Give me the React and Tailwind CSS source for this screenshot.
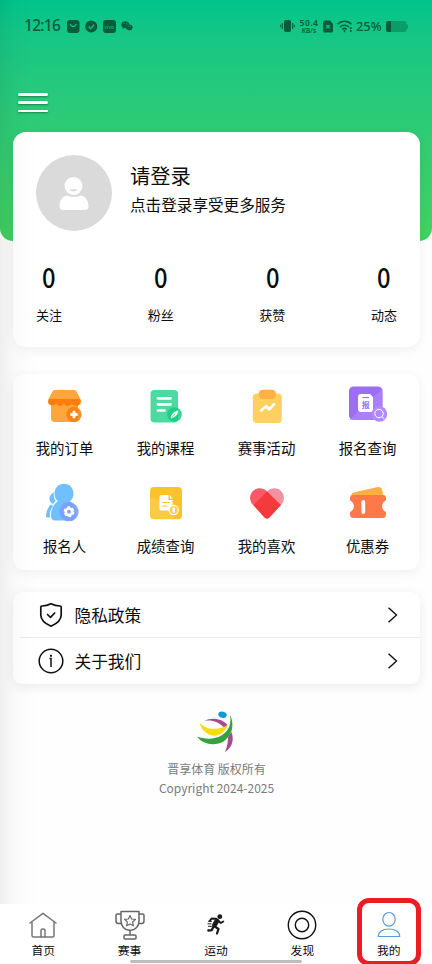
import { FaWeixin } from 'react-icons/fa';

const STATS = ['关注', '粉丝', '获赞', '动态'];

const OrderIcon = () => (
  <svg className="w-12 h-12" viewBox="0 0 48 48" fill="none">
    <path d="M10 22h27v15a4 4 0 0 1-4 4H14a4 4 0 0 1-4-4z" fill="#ffa63d" />
    <path d="M14 9h19a3 3 0 0 1 2.700 1.700L40 19c.6 3-1 5.500-4 5.500H11c-3 0-4.600-2.500-4-5.500l4.300-8.300A3 3 0 0 1 14 9z" fill="#ffa63d" />
    <path d="M9 18h28.500q2 0 2 2c0 3-2 5-4.500 5-2 0-3.500-1-4.200-2.500-1 1.500-2.500 2.500-4 2.500-1.600 0-3-1-3.800-2.500-1 1.500-2.400 2.500-4 2.500s-3.200-1-4-2.500c-.8 1-2.200 1.500-3.500 1.500C8.500 24 7 22 7.500 20q0-2 1.500-2z" fill="#ff7d0c" />
    <circle cx="33" cy="33.500" r="7.700" fill="#ff7a0a" opacity=".85" />
    <path d="M33 31v5M30.500 33.500h5" stroke="#fff" strokeWidth="3" strokeLinecap="round" />
  </svg>
);

const CourseIcon = () => (
  <svg className="w-12 h-12" viewBox="0 0 48 48" fill="none">
    <rect x="8.500" y="9" width="27.500" height="32.500" rx="4" fill="#4bdba0" />
    <path d="M16 17.300h12.500M16 23.300h12.500M16 29.500h6.500" stroke="#fff" strokeWidth="2.700" strokeLinecap="round" />
    <circle cx="32.500" cy="33.500" r="7.300" fill="#14cd82" opacity=".85" />
    <path d="M28.700 37.800c.3-4.500 3.300-7.500 7.600-8.200-.3 3.900-2.600 6.700-7.600 8.200z" fill="#fff" />
    <path d="M29 37.500l4-4.500" stroke="#14cd82" strokeWidth=".7" />
  </svg>
);

const EventIcon = () => (
  <svg className="w-12 h-12" viewBox="0 0 48 48" fill="none">
    <rect x="9.800" y="12.500" width="29" height="29.500" rx="4" fill="#ffcf60" />
    <rect x="15.800" y="8.700" width="17" height="9.300" rx="4" fill="#ffb243" />
    <path d="M18 29.500l5.300-4.300 3 3L31 23.300" stroke="#fff" strokeWidth="2.700" strokeLinecap="round" strokeLinejoin="round" />
  </svg>
);

const EnrollQueryIcon = () => (
  <svg className="w-12 h-12" viewBox="0 0 48 48" fill="none">
    <rect x="5" y="5.500" width="33.500" height="33.500" rx="4.500" fill="#9b6ef3" />
    <path d="M5 39L38.500 8v26.500a4.500 4.500 0 0 1-4.500 4.500z" fill="#b48cff" opacity=".6" />
    <path d="M17 13h9l3 3v12.500a2.500 2.500 0 0 1-2.500 2.500h-9.500a3 3 0 0 1-3-3V16a3 3 0 0 1 3-3z" fill="#fff" />
    <path d="M18.500 16.500h6.500" stroke="#9b6ef3" strokeWidth="1.200" />
    <text x="21.700" y="26.700" fontSize="8" fontWeight="700" textAnchor="middle" fill="#9b6ef3">报</text>
    <circle cx="35.500" cy="33" r="7.700" fill="#b38af8" />
    <circle cx="35" cy="32.500" r="4.200" stroke="#fff" strokeWidth="1" />
    <path d="M38 35.700l2 1.800" stroke="#fff" strokeWidth="1" strokeLinecap="round" />
  </svg>
);

const PeopleIcon = () => (
  <svg className="w-12 h-12" viewBox="0 0 48 48" fill="none">
    <path d="M13 13.500c-4.500 1.500-6 6.500-3 10.300l2 1.200c.7-1.200 1.500-2 2.700-3-1.700-2.500-2.300-5.500-1.700-8.500zM10 25.500c-3 2.500-5 7.500-5 11.500 0 1 .5 1.500 1.500 1.500H9c-.5-4.500.5-8.500 3-11.500z" fill="#70bfff" />
    <path d="M23 4.800c5.300 0 9.500 4.200 9.500 9.600 0 3.400-1.200 5.900-3.500 7.900 4 2.500 6 7 6 14 0 3-2 5.200-5 5.200H14.500c-3 0-4.500-1.500-4.500-4.500 0-7 2.500-12 7-14.700-2.300-2-3.500-4.500-3.500-7.900 0-5.400 4.200-9.600 9.500-9.600z" fill="#70bfff" />
    <circle cx="28" cy="32.700" r="9.600" fill="#7c9efa" opacity=".92" />
    <circle cx="28" cy="32.700" r="3.200" stroke="#fff" strokeWidth="2.600" />
    <circle cx="28" cy="32.700" r="4.700" stroke="#fff" strokeWidth="1.500" strokeDasharray="2.900 2.022" />
  </svg>
);

const ScoreIcon = () => (
  <svg className="w-12 h-12" viewBox="0 0 48 48" fill="none">
    <rect x="8" y="8" width="32" height="32.300" rx="4" fill="#fcc22d" />
    <path d="M8 19c9 0 21 8 24 21H12a4 4 0 0 1-4-4z" fill="#ffd765" opacity=".4" />
    <path d="M19.500 16h7v5h4v8.500a2 2 0 0 1-2 2h-9a2 2 0 0 1-2-2V18a2 2 0 0 1 2-2z" fill="#fff" />
    <path d="M27.800 16l3 3.500h-3z" fill="#fff" />
    <path d="M20.500 23.500h7M20.500 27h5" stroke="#fcc22d" strokeWidth="1.200" />
    <circle cx="31.700" cy="31" r="4.600" fill="#fbcf55" stroke="#fff" strokeWidth="1.100" />
    <rect x="30.500" y="28.200" width="2.400" height="5.400" rx="1.200" fill="#fff" />
  </svg>
);

const HeartIcon = () => (
  <svg className="w-12 h-12" viewBox="0 0 48 48" fill="none">
    <path d="M24 12.500c3.800-4 9.700-4.200 13.700-.8 4 3.600 4.200 9.800.8 13.500L26.300 38.500c-1.400 1.400-3.200 1.400-4.600 0L18 35z" fill="#f192a3" />
    <path d="M24 12.500c-3.800-4-9.700-4.200-13.700-.8-4 3.600-4.200 9.800-.8 13.500l12.200 13.300c1.400 1.400 3.200 1.400 4.600 0L38 26z" fill="#fa5a68" />
    <path d="M24 12.500L37.800 26 26.300 38.500c-1.400 1.400-3.200 1.400-4.600 0L10.500 26.200z" fill="#f43a3d" />
  </svg>
);

const CouponIcon = () => (
  <svg className="w-12 h-12" viewBox="0 0 48 48" fill="none">
    <rect x="6" y="4.500" width="36" height="14" fill="#fcfcfc" />
    <path d="M7.500 16.500c0-2 1-2.700 3-3.200L34 8q2.500-.5 3.500 1.500L40 18H7.500z" fill="#ffae44" />
    <path d="M9 16h30a3 3 0 0 1 3 3v2.500c-5.200 2.500-5.200 9 0 11.500v2.500a3.500 3.500 0 0 1-3.500 3.500h-29A3.500 3.500 0 0 1 6 35.500V33c5.200-2.500 5.200-9 0-11.500V19a3 3 0 0 1 3-3z" fill="#ff7848" />
    <path d="M19.300 23v10" stroke="#fff" strokeWidth="3.800" strokeLinecap="round" />
  </svg>
);

const MENU = [
  { label: '我的订单', icon: OrderIcon },
  { label: '我的课程', icon: CourseIcon },
  { label: '赛事活动', icon: EventIcon },
  { label: '报名查询', icon: EnrollQueryIcon },
  { label: '报名人', icon: PeopleIcon },
  { label: '成绩查询', icon: ScoreIcon },
  { label: '我的喜欢', icon: HeartIcon },
  { label: '优惠券', icon: CouponIcon },
];

const ShieldIcon = () => (
  <svg className="w-[26px] h-[26px]" viewBox="0 0 26 26" fill="none" stroke="#111" strokeWidth="1.700" strokeLinejoin="round" strokeLinecap="round">
    <path d="M13 1.800c2.700 1.500 6 2.200 9.200 2.200q1 0 1 1v8c0 5.500-4 8.500-10.200 11.200C6.800 21.500 2.800 18.500 2.800 13V5q0-1 1-1C7 4 10.300 3.300 13 1.800z" />
    <path d="M9.500 12.500l3 2.800 4.200-4.300" />
  </svg>
);

const InfoIcon = () => (
  <svg className="w-[26px] h-[26px]" viewBox="0 0 26 26" fill="none" stroke="#111" strokeWidth="1.500">
    <circle cx="13" cy="13" r="11.800" />
    <path d="M11.500 10.500H13V19" />
    <path d="M13 6.800v1.900" strokeWidth="1.900" />
  </svg>
);

const LINKS = [
  { label: '隐私政策', icon: ShieldIcon },
  { label: '关于我们', icon: InfoIcon },
];

const HomeIcon = () => (
  <svg className="w-8 h-8" viewBox="0 0 32 32" fill="none" stroke="#777" strokeWidth="1.500" strokeLinejoin="round" strokeLinecap="round">
    <path d="M3 14L16 4.300 29 14M5 13v13.500q0 1.500 1.500 1.500h19q1.500 0 1.500-1.500V13" />
    <path d="M14 28v-6.500q0-1.500 2-1.500t2 1.500V28" />
  </svg>
);

const TrophyIcon = () => (
  <svg className="w-8 h-8" viewBox="0 0 32 32" fill="none" stroke="#666" strokeWidth="1.500" strokeLinejoin="round">
    <path d="M7 2.500h18V12c0 5-3.500 9.300-9 9.300S7 17 7 12zM7 5H3.500Q2 5 2 6.500V12q0 2.500 2.500 2.500h3M25 5h3.500Q30 5 30 6.500V12q0 2.500-2.500 2.500h-3" />
    <path d="M16 21.500V26M11 26h10q1 0 1 1v2q0 1-1 1H11q-1 0-1-1v-2q0-1 1-1z" />
    <path d="M16 6.500l1.600 3.500 3.900.4-2.900 2.600.8 3.800-3.400-1.900-3.400 1.900.8-3.800-2.900-2.600 3.900-.4z" strokeWidth="1.200" />
  </svg>
);

const RunIcon = () => (
  <svg className="w-8 h-8" viewBox="0 0 32 32" fill="none" stroke="#1b1b1b" strokeLinecap="round" strokeLinejoin="round">
    <circle cx="19.800" cy="7.700" r="2.400" fill="#1b1b1b" stroke="none" />
    <path d="M17 11.700L14.500 16" strokeWidth="4.800" />
    <path d="M16 9.800l-4.500-.3-1.800 2.500M18.500 12l2.300 2 2.500-1.500" strokeWidth="1.900" />
    <path d="M14.800 17.500l3.700 2.500-1.500 4.500M13.500 17.500l-1.800 3.700-3.400.3" strokeWidth="2.300" />
    <path d="M8.500 12.300h3M8 14.800h3M8.500 17.300h3" strokeWidth="1" />
  </svg>
);

const DiscoverIcon = () => (
  <svg className="w-8 h-8" viewBox="0 0 32 32" fill="none" stroke="#111" strokeWidth="1.400">
    <circle cx="16" cy="16" r="13.700" />
    <circle cx="16" cy="16" r="6.700" />
  </svg>
);

const MineIcon = () => (
  <svg className="w-8 h-8" viewBox="0 0 32 32" fill="none" stroke="#5a9bdc" strokeWidth="1.200" strokeLinejoin="round">
    <ellipse cx="16" cy="10.300" rx="6.200" ry="6.800" />
    <path d="M5.300 27.500c0-4.500 4.200-7.500 10.700-7.500s10.700 3 10.700 7.500z" />
  </svg>
);

const TABS = [
  { label: '首页', icon: HomeIcon },
  { label: '赛事', icon: TrophyIcon },
  { label: '运动', icon: RunIcon },
  { label: '发现', icon: DiscoverIcon },
  { label: '我的', icon: MineIcon, marked: true },
];

function StatusBar() {
  return (
    <div className="flex items-center h-[52px] pl-6 pr-6 text-[#075c3b]">
      <span className="w-[43px] text-[15.500px] font-medium leading-none tracking-[-0.700px] font-['Noto_Sans',sans-serif]">12:16</span>
      <div className="flex items-center gap-[5.500px]">
        <svg className="w-[12.500px] h-[13px]" viewBox="0 0 12.5 13">
          <rect width="12.500" height="13" rx="3" fill="currentColor" />
          <path d="M3.500 4.500c1.200 2.600 4.300 2.600 5.500 0" fill="none" stroke="#12c587" strokeWidth="1.400" strokeLinecap="round" />
        </svg>
        <svg className="w-[12.500px] h-[13px]" viewBox="0 0 13 13">
          <circle cx="6.500" cy="6.500" r="6.300" fill="currentColor" />
          <path d="M3.700 6.500l2.200 2.200 3.700-4" fill="none" stroke="#12c587" strokeWidth="1.400" />
        </svg>
        <span className="flex items-center justify-center w-[12.500px] h-[13px] rounded-[3px] bg-[#075c3b] text-[5px] leading-none text-[#12c587]">vivo</span>
        <FaWeixin className="w-[12px] h-[12px]" />
      </div>
      <div className="flex items-center ml-auto">
        <svg className="w-[15px] h-[14px]" viewBox="0 0 15 14">
          <rect x="4" y="1" width="7" height="12" rx="1.800" fill="currentColor" />
          <path d="M2.300 4v6M12.700 4v6M.6 5.800v2.400M14.400 5.800v2.400" stroke="currentColor" strokeWidth="1.100" />
        </svg>
        <div className="flex flex-col items-center w-[24px] ml-[2px] mt-[-1px] font-semibold font-['Noto_Sans',sans-serif]">
          <span className="text-[8.500px] leading-[9px] tracking-[0.500px]">50.4</span>
          <span className="text-[6.500px] leading-[7px]">KB/s</span>
        </div>
        <svg className="w-[10px] h-[13px] ml-[2px]" viewBox="0 0 10 13">
          <path d="M2 0.500h5L10 4v7a1.500 1.500 0 0 1-1.500 1.500h-7A1.500 1.500 0 0 1 0 11V2.500a2 2 0 0 1 2-2z" fill="currentColor" />
          <path d="M3.300 5l3.400 3.400M6.700 5L3.300 8.400" stroke="#12c587" strokeWidth="1.200" />
        </svg>
        <svg className="w-[16px] h-[13px] ml-[4px]" viewBox="0 0 16 13" fill="none" stroke="currentColor" strokeWidth="1.600">
          <path d="M.5 4.300c4-4 10-4 14 0M3 7c2.600-2.400 6.300-2.400 8.900 0M5.300 9.500c1.200-1.200 3.100-1.200 4.300 0" />
          <path d="M7.500 10.300v2M13.700 7v5" strokeDasharray="2 1" />
        </svg>
        <span className="w-[30px] ml-[3px] text-[12.800px] leading-none font-medium font-['Noto_Sans',sans-serif]">25%</span>
        <svg className="w-[22px] h-[11px]" viewBox="0 0 22 11">
          <rect width="20.500" height="11" rx="2.500" fill="#0b9d69" />
          <path d="M20 3h1q1 0 1 2.500t-1 2.500h-1z" fill="#0b9d69" />
          <path d="M2.500 0H5v11H2.500A2.500 2.500 0 0 1 0 8.500v-6A2.500 2.500 0 0 1 2.500 0z" fill="currentColor" />
        </svg>
      </div>
    </div>
  );
}

export default function App() {
  return (
    <div className="relative w-[432px] h-[964px] overflow-hidden flex flex-col bg-[#fefefe] text-[#0c0c0c] font-['Noto_Sans_CJK_SC',sans-serif]">
      {/* Header */}
      <header className="shrink-0 h-[241px] rounded-b-[13px] bg-gradient-to-b from-[#00c48b] to-[#43d15f]">
        <StatusBar />
        <button className="flex flex-col gap-[5.700px] w-[30px] ml-[18px] mt-[41px]">
          {[0, 1, 2].map((i) => (
            <span key={i} className="w-full h-[2.700px] rounded-full bg-white shadow-[0_1px_2px_rgba(0,0,0,0.35)]"></span>
          ))}
        </button>
      </header>

      {/* Profile */}
      <section className="shrink-0 h-[215px] -mt-[109px] mx-[13px] w-[407px] rounded-[13px] bg-white shadow-[0_3px_12px_rgba(0,0,0,0.06)]">
        <div className="flex pt-[23px] pl-[23px]">
          <div className="flex items-center justify-center w-[75.500px] h-[75.500px] rounded-full bg-[#dadada]">
            <svg className="w-[32px] h-[36px] mt-[2px]" viewBox="0 0 32 36">
              <circle cx="15.500" cy="10" r="9" fill="#fff" />
              <path d="M11.800 13.300h7.400c-1 3-6.400 3-7.400 0z" fill="#dadada" />
              <path d="M9.500 19.500q6.500 3 13 0c5 .5 8 5 8 10.500 0 3-1.500 4-4.500 4H6c-3 0-4.500-1-4.500-4C1.500 24.500 4.500 20 9.500 19.500z" fill="#fff" />
            </svg>
          </div>
          <div className="ml-[18.500px] pt-[5px]">
            <h1 className="text-[20.300px] leading-[30px]">请登录</h1>
            <p className="text-[15.600px] leading-[24px] mt-[2px]">点击登录享受更多服务</p>
          </div>
        </div>
        <div className="flex justify-between pl-[23px] pr-[23px] mt-[27px]">
          {STATS.map((label) => (
            <div key={label} className="flex flex-col items-center">
              <span className="text-[27px] leading-[38px] font-medium scale-x-[0.88]">0</span>
              <span className="text-[13px] leading-5 mt-[9px]">{label}</span>
            </div>
          ))}
        </div>
      </section>

      {/* Menu grid */}
      <section className="shrink-0 grid grid-cols-4 content-start gap-y-[17px] w-[406px] h-[196px] mt-[27px] ml-[13px] px-[1px] pt-[7px] rounded-[11px] bg-white shadow-[0_3px_12px_rgba(0,0,0,0.06)]">
        {MENU.map(({ label, icon: Icon }) => (
          <div key={label} className="flex flex-col items-center h-[81px]">
            <Icon />
            <span className="mt-[7px] text-[14.400px] leading-6">{label}</span>
          </div>
        ))}
      </section>

      {/* Links */}
      <section className="shrink-0 w-[407px] h-[92px] mt-[22px] ml-[13px] rounded-[9px] bg-white shadow-[0_3px_12px_rgba(0,0,0,0.08)]">
        {LINKS.map(({ label, icon: Icon }, i) => (
          <div
            key={label}
            className={`flex items-center h-[46px] ml-[7px] pl-[18px] pr-[22px] ${i === 0 ? 'border-b border-[#ebebeb]' : ''}`}
          >
            <Icon />
            <span className="ml-[10.500px] text-[16.700px] leading-6">{label}</span>
            <svg className="w-[11px] h-4 ml-auto" viewBox="0 0 11 16" fill="none" stroke="#111" strokeWidth="1.400">
              <path d="M1.500 .8L9.500 8l-8 7.200" />
            </svg>
          </div>
        ))}
      </section>

      {/* Footer */}
      <footer className="flex flex-col items-center flex-1 pl-[1px] text-[#7b7b7b] text-[12px]">
        <svg className="w-[40px] h-[44px] mt-[25px]" viewBox="0 0 40 44">
          <ellipse cx="25.500" cy="5.700" rx="4.300" ry="3.100" fill="#0e9ad7" transform="rotate(15 25.500 5.700)" />
          <path d="M7 12c8-4 18-2.500 23.500 4l-3.500 2.500C21.500 13 14.500 10.500 7 12z" fill="#a94c8d" />
          <path d="M2.500 13.500c6 7 15 8.500 28.500 3-5 9.500-13 12.500-20 8.500-4.500-2.500-7.500-6.500-8.500-11.500z" fill="#f8dc12" />
          <path d="M33 5.500c5 11 2 21-6.500 27-8 4.500-20.500 3.500-26.500-5 8 3 17.500 3 24.500-1 7.500-5 10-11 8.500-21z" fill="#35a23d" />
          <path d="M34.500 23c3 8 .5 16-6.500 20 2.500-6 3-10.500 3-15z" fill="#a94c8d" />
        </svg>
        <p className="mt-[6px] leading-[19px]">晋享体育 版权所有</p>
        <p className="leading-[19px]">Copyright 2024-2025</p>
      </footer>

      {/* Soft shade along the left edge, above the tab bar */}
      <div className="absolute left-0 top-0 w-[36px] h-[904px] pointer-events-none bg-gradient-to-r from-black/[0.06] via-black/[0.018] via-40% to-transparent"></div>

      {/* Tab bar */}
      <nav className="relative shrink-0 flex h-[60px] bg-white">
        {TABS.map(({ label, icon: Icon, marked }) => (
          <div key={label} className="relative flex flex-1 flex-col items-center pt-[5px]">
            <Icon />
            <span className="text-[11.800px] leading-[18px]">{label}</span>
            {marked && (
              <div className="absolute left-[11px] -top-[6px] w-[64px] h-[68px] rounded-[12px] border-[5px] border-[#ea1c24]"></div>
            )}
          </div>
        ))}
        <div className="absolute left-[130px] bottom-[1px] w-[172px] h-[3px] rounded-full bg-[#bdbdbd]"></div>
      </nav>
    </div>
  );
}
